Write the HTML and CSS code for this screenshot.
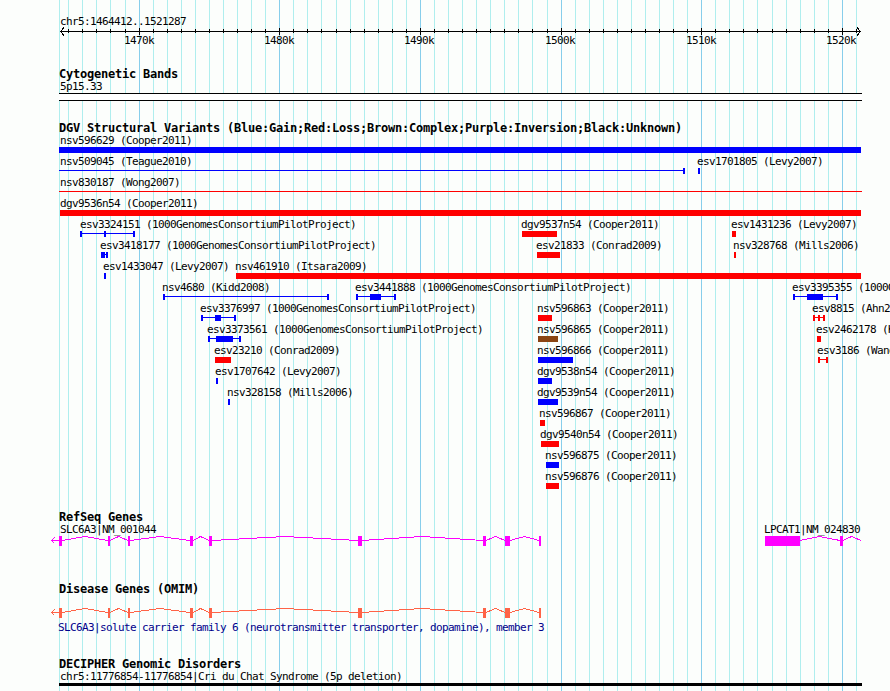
FILE: index.html
```html
<!DOCTYPE html>
<html lang="en">
<head>
  <meta charset="UTF-8">
  <title>chr5:1464412..1521287</title>
  <link rel="stylesheet" href="styles.css">
</head>
<body>
  <div class="browser">
    <svg class="grid" width="890" height="691">
      <path class="minor" d="M59.5 0v691M68.5 0v691M82.5 0v691M96.5 0v691M110.5 0v691M125.5 0v691M153.5 0v691M167.5 0v691M181.5 0v691M195.5 0v691M209.5 0v691M223.5 0v691M237.5 0v691M251.5 0v691M265.5 0v691M293.5 0v691M307.5 0v691M321.5 0v691M336.5 0v691M350.5 0v691M364.5 0v691M378.5 0v691M392.5 0v691M406.5 0v691M434.5 0v691M448.5 0v691M462.5 0v691M476.5 0v691M490.5 0v691M504.5 0v691M518.5 0v691M532.5 0v691M547.5 0v691M575.5 0v691M589.5 0v691M603.5 0v691M617.5 0v691M631.5 0v691M645.5 0v691M659.5 0v691M673.5 0v691M687.5 0v691M715.5 0v691M729.5 0v691M743.5 0v691M757.5 0v691M772.5 0v691M786.5 0v691M800.5 0v691M814.5 0v691M828.5 0v691M856.5 0v691"/>
      <path class="major" d="M139.5 0v691M279.5 0v691M420.5 0v691M561.5 0v691M701.5 0v691M842.5 0v691"/>
    </svg>

    <section class="track ruler">
      <svg width="890" height="52">
        <text x="60" y="11">chr5:1464412..1521287</text>
        <path class="axis" d="M60 17.5H861M64 13.5L60.5 17.5L64 21.5M857 13.5L860.5 17.5L857 21.5"/>
        <path class="axis" d="M68.5 15v4M82.5 15v4M96.5 15v4M110.5 15v4M125.5 15v4M153.5 15v4M167.5 15v4M181.5 15v4M195.5 15v4M209.5 15v4M223.5 15v4M237.5 15v4M251.5 15v4M265.5 15v4M293.5 15v4M307.5 15v4M321.5 15v4M336.5 15v4M350.5 15v4M364.5 15v4M378.5 15v4M392.5 15v4M406.5 15v4M434.5 15v4M448.5 15v4M462.5 15v4M476.5 15v4M490.5 15v4M504.5 15v4M518.5 15v4M532.5 15v4M547.5 15v4M575.5 15v4M589.5 15v4M603.5 15v4M617.5 15v4M631.5 15v4M645.5 15v4M659.5 15v4M673.5 15v4M687.5 15v4M715.5 15v4M729.5 15v4M743.5 15v4M757.5 15v4M772.5 15v4M786.5 15v4M800.5 15v4M814.5 15v4M828.5 15v4M856.5 15v4"/>
        <path class="axis" d="M139.5 14v7M279.5 14v7M420.5 14v7M561.5 14v7M701.5 14v7M842.5 14v7"/>
        <text x="124" y="30">1470k</text>
        <text x="264" y="30">1480k</text>
        <text x="404" y="30">1490k</text>
        <text x="545" y="30">1500k</text>
        <text x="686" y="30">1510k</text>
        <text x="826" y="30">1520k</text>
      </svg>
    </section>

    <section class="track">
      <h2>Cytogenetic Bands</h2>
      <svg width="890" height="40">
        <text x="60" y="10">5p15.33</text>
        <rect class="band" x="59" y="13" width="803" height="8"/>
        <path class="axis" d="M59 13.5H862M59 20.5H862"/>
      </svg>
    </section>

    <section class="track">
      <h2>DGV Structural Variants (Blue:Gain;Red:Loss;Brown:Complex;Purple:Inversion;Black:Unknown)</h2>
      <svg width="890" height="375">
        <text x="60" y="10">nsv596629 (Cooper2011)</text>
        <path class="gain" d="M59 13h802v6h-802z"/>

        <text x="60" y="31">nsv509045 (Teague2010)</text>
        <path class="gain" d="M59 36h626v1h-626zM683 34h2v6h-2z"/>
        <text x="697" y="31">esv1701805 (Levy2007)</text>
        <path class="gain" d="M698 34h2v6h-2z"/>

        <text x="60" y="52">nsv830187 (Wong2007)</text>
        <path class="loss" d="M59 57h803v1h-803z"/>

        <text x="60" y="73">dgv9536n54 (Cooper2011)</text>
        <path class="loss" d="M60 76h801v6h-801z"/>

        <text x="80" y="94">esv3324151 (1000GenomesConsortiumPilotProject)</text>
        <path class="gain" d="M80 99h55v1h-55zM80 97h2v6h-2zM104 97h2v6h-2zM133 97h2v6h-2z"/>
        <text x="521" y="94">dgv9537n54 (Cooper2011)</text>
        <path class="loss" d="M522 97h35v6h-35z"/>
        <text x="731" y="94">esv1431236 (Levy2007)</text>
        <path class="loss" d="M732 97h4v6h-4z"/>

        <text x="100" y="115">esv3418177 (1000GenomesConsortiumPilotProject)</text>
        <path class="gain" d="M101 118h4v6h-4zM105 120h1v1h-1zM106 118h2v6h-2z"/>
        <text x="536" y="115">esv21833 (Conrad2009)</text>
        <path class="loss" d="M537 118h23v6h-23z"/>
        <text x="733" y="115">nsv328768 (Mills2006)</text>
        <path class="loss" d="M734 118h2v6h-2z"/>

        <text x="103" y="136">esv1433047 (Levy2007)</text>
        <path class="gain" d="M104 139h2v6h-2z"/>
        <text x="235" y="136">nsv461910 (Itsara2009)</text>
        <path class="loss" d="M236 139h625v6h-625z"/>

        <text x="162" y="157">nsv4680 (Kidd2008)</text>
        <path class="gain" d="M163 162h166v1h-166zM163 160h2v6h-2zM327 160h2v6h-2z"/>
        <text x="355" y="157">esv3441888 (1000GenomesConsortiumPilotProject)</text>
        <path class="gain" d="M356 162h40v1h-40zM356 160h2v6h-2zM370 160h11v6h-11zM394 160h2v6h-2z"/>
        <text x="792" y="157">esv3395355 (1000GenomesConsortiumPilotProject)</text>
        <path class="gain" d="M793 162h45v1h-45zM793 160h2v6h-2zM807 160h16v6h-16zM836 160h2v6h-2z"/>

        <text x="200" y="178">esv3376997 (1000GenomesConsortiumPilotProject)</text>
        <path class="gain" d="M201 183h35v1h-35zM201 181h2v6h-2zM215 181h6v6h-6zM234 181h2v6h-2z"/>
        <text x="537" y="178">nsv596863 (Cooper2011)</text>
        <path class="loss" d="M538 181h14v6h-14z"/>
        <text x="812" y="178">esv8815 (Ahn2009)</text>
        <path class="loss" d="M813 183h12v1h-12zM813 181h2v6h-2zM818 181h2v6h-2zM823 181h2v6h-2z"/>

        <text x="207" y="199">esv3373561 (1000GenomesConsortiumPilotProject)</text>
        <path class="gain" d="M208 204h33v1h-33zM208 202h2v6h-2zM216 202h17v6h-17zM239 202h2v6h-2z"/>
        <text x="537" y="199">nsv596865 (Cooper2011)</text>
        <path class="complex" d="M538 202h20v6h-20z"/>
        <text x="816" y="199">esv2462178 (Kidd2010)</text>
        <path class="loss" d="M817 202h4v6h-4z"/>

        <text x="214" y="220">esv23210 (Conrad2009)</text>
        <path class="loss" d="M215 223h16v6h-16z"/>
        <text x="537" y="220">nsv596866 (Cooper2011)</text>
        <path class="gain" d="M538 223h35v6h-35z"/>
        <text x="817" y="220">esv3186 (Wang2008)</text>
        <path class="loss" d="M818 225h10v1h-10zM818 223h2v6h-2zM826 223h2v6h-2z"/>

        <text x="215" y="241">esv1707642 (Levy2007)</text>
        <path class="gain" d="M216 244h2v6h-2z"/>
        <text x="537" y="241">dgv9538n54 (Cooper2011)</text>
        <path class="gain" d="M538 244h14v6h-14z"/>

        <text x="227" y="262">nsv328158 (Mills2006)</text>
        <path class="gain" d="M228 265h2v6h-2z"/>
        <text x="537" y="262">dgv9539n54 (Cooper2011)</text>
        <path class="gain" d="M538 265h20v6h-20z"/>

        <text x="539" y="283">nsv596867 (Cooper2011)</text>
        <path class="loss" d="M540 286h5v6h-5z"/>

        <text x="540" y="304">dgv9540n54 (Cooper2011)</text>
        <path class="loss" d="M541 307h18v6h-18z"/>

        <text x="545" y="325">nsv596875 (Cooper2011)</text>
        <path class="gain" d="M546 328h13v6h-13z"/>

        <text x="545" y="346">nsv596876 (Cooper2011)</text>
        <path class="loss" d="M546 349h13v6h-13z"/>
      </svg>
    </section>

    <section class="track">
      <h2>RefSeq Genes</h2>
      <svg width="890" height="58">
        <defs>
          <g id="slc6a3">
            <path class="intron" d="M59 4.5H51.5M54.5 1.5L51.5 4.5L54.5 7.5M62 4.5L85 .5L108 4.5M110 4.5L118.500 .5L128 4.500M130 4.500L160 .5L190 4.500M193 4.500L200.500 .5L209 4.500M212 4.500L285 .5L358 4.500M362 4.500L422 .5L483 4.500M486 4.500L495.500 .5L505 4.500M510 4.500L524.500 .5L539 4.500"/>
            <path class="exon" d="M59 0h3v10h-3zM108 0h2v10h-2zM128 0h2v10h-2zM190 0h3v10h-3zM209 0h3v10h-3zM358 0h4v10h-4zM483 0h3v10h-3zM505 0h5v10h-5zM539 0h2v10h-2z"/>
          </g>
        </defs>
        <text x="60" y="10">SLC6A3|NM_001044</text>
        <use class="refseq" href="#slc6a3" y="13"/>
        <text x="764" y="10">LPCAT1|NM_024830</text>
        <g class="refseq">
          <path class="intron" d="M800 17.5L819.500 13.500L840 17.500M843 17.500L851.500 13.500L861 17.500"/>
          <path class="exon" d="M765 13h35v10h-35zM840 13h3v10h-3z"/>
        </g>
      </svg>
    </section>

    <section class="track">
      <h2>Disease Genes (OMIM)</h2>
      <svg width="890" height="61">
        <use class="omim" href="#slc6a3" y="13"/>
        <text class="description" x="58" y="36">SLC6A3|solute carrier family 6 (neurotransmitter transporter, dopamine), member 3</text>
      </svg>
    </section>

    <section class="track">
      <h2>DECIPHER Genomic Disorders</h2>
      <svg width="890" height="21">
        <text x="60" y="10">chr5:11776854-11776854|Cri du Chat Syndrome (5p deletion)</text>
        <rect x="59" y="13" width="803" height="3"/>
      </svg>
    </section>
  </div>
</body>
</html>
```
FILE: styles.css
```css
body {
  margin: 0;
  background: #fcfefc;
  font-family: "DejaVu Sans Mono", monospace;
  color: #000;
}
.browser {
  position: relative;
  width: 890px;
  height: 691px;
  overflow: hidden;
}
.grid {
  position: absolute;
  top: 0;
  left: 0;
}
.minor {
  stroke: #afeeee;
}
.major {
  stroke: #87ceeb;
}
.track {
  position: relative;
}
.track svg {
  display: block;
}
.ruler {
  padding-top: 14px;
}
h2 {
  margin: 0;
  padding-left: 59px;
  height: 14px;
  font-size: 12px;
  line-height: 16px;
  letter-spacing: -0.224px;
  white-space: nowrap;
}
text {
  font-size: 11px;
  letter-spacing: -0.622px;
}
path, rect {
  shape-rendering: crispEdges;
}
.axis {
  fill: none;
  stroke: #000;
}
.band {
  fill: #fff;
}
.gain {
  fill: #00f;
}
.loss {
  fill: #f00;
}
.complex {
  fill: #8b4513;
}
.intron {
  fill: none;
  stroke: currentColor;
}
.exon {
  fill: currentColor;
}
.refseq {
  color: #f0f;
}
.omim {
  color: #ff6347;
}
.description {
  fill: #00008b;
}
```
